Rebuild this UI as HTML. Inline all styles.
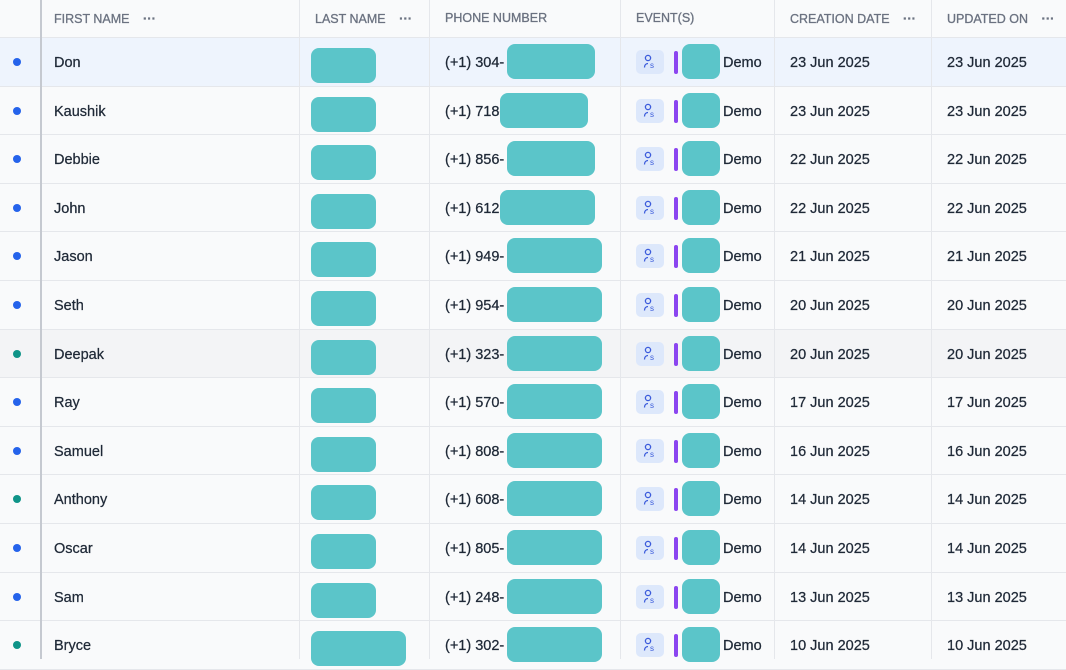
<!DOCTYPE html>
<html><head><style>
body{margin:0;width:1066px;height:659px;overflow:hidden;background:#f9fafb;font-family:"Liberation Sans",sans-serif;position:relative}
.h{position:absolute;top:0;left:0;width:1066px;height:38px;box-sizing:border-box;background:#f9fafb;border-bottom:1px solid #e5e7eb}
.ht{position:absolute;top:11px;font-size:12.5px;color:#6b7280;-webkit-text-stroke:0.3px #6b7280}
.ht b{font-weight:700;margin-left:10px;letter-spacing:0px;font-size:13px}
.vl{position:absolute;top:0;height:659px;width:1px;background:#e5e7eb}
.r{position:absolute;left:0;width:1066px;box-sizing:border-box;border-bottom:1px solid #e5e7eb;background:#f9fafb}
.r span{position:absolute;font-size:14.5px;color:#1f2937;top:17px;-webkit-text-stroke:0.25px #1f2937}
.dot{position:absolute;left:13px;top:20px;width:8px;height:8px;border-radius:50%;background:#2563eb}
.g{background:#0f9488}
.bl{position:absolute;background:#5bc5c9;border-radius:8px}
.ic{position:absolute;left:636px;top:12px;width:28px;height:24px;border-radius:5px;background:#dde8fb}
.bar{position:absolute;left:674px;top:13px;width:4px;height:23px;border-radius:2px;background:#8b45f0}
</style></head><body>
<div class="h">
<span class="ht" style="left:54px">FIRST NAME <b>···</b></span>
<span class="ht" style="left:315px">LAST NAME <b>···</b></span>
<span class="ht" style="left:445px">PHONE NUMBER</span>
<span class="ht" style="left:636px">EVENT(S)</span>
<span class="ht" style="left:790px">CREATION DATE <b>···</b></span>
<span class="ht" style="left:947px">UPDATED ON <b>···</b></span>
</div>
<div id="rows"></div>
<div class="vl" style="left:40px;background:#c5c9d0;width:2px"></div>
<div class="vl" style="left:299px"></div>
<div class="vl" style="left:429px"></div>
<div class="vl" style="left:620px"></div>
<div class="vl" style="left:774px"></div>
<div class="vl" style="left:931px"></div>
<script>
var d=[["Don","304",1,"23",507,88,0],["Kaushik","718",1,"23",500,88,0],["Debbie","856",1,"22",507,88,0],["John","612",1,"22",500,95,0],["Jason","949",1,"21",507,95,0],["Seth","954",1,"20",507,95,0],["Deepak","323",0,"20",507,95,0],["Ray","570",1,"17",507,95,0],["Samuel","808",1,"16",507,95,0],["Anthony","608",0,"14",507,95,0],["Oscar","805",1,"14",507,95,0],["Sam","248",1,"13",507,95,0],["Bryce","302",0,"10",507,95,1]];
var h="";
d.forEach(function(x,i){
var t=Math.round(38+i*48.6);var nt=Math.round(38+(i+1)*48.6);var bg=i==0?"#eef4fd":(i==6?"#f3f4f6":"#f9fafb");
h+='<div class="r" style="top:'+t+'px;height:'+(nt-t)+'px;background:'+bg+'">'+
'<div class="dot'+(x[2]?'':' g')+'"></div>'+
'<span style="left:54px">'+x[0]+'</span>'+
'<div class="bl" style="left:311px;top:10px;width:'+(x[6]?95:65)+'px;height:35px"></div>'+
'<span style="left:445px">(+1) '+x[1]+'-</span>'+
'<div class="bl" style="left:'+x[4]+'px;top:6px;width:'+x[5]+'px;height:35px"></div>'+
'<div class="ic"><svg width="28" height="24" viewBox="0 0 28 24"><circle cx="12" cy="8" r="2.6" fill="none" stroke="#3b5bdb" stroke-width="1.3"/><path d="M8.5 17.5c0-2.5 1.5-4 3.5-4" fill="none" stroke="#3b5bdb" stroke-width="1.3"/><text x="14" y="18" font-size="8" fill="#3b5bdb" font-family="Liberation Sans">s</text></svg></div>'+
'<div class="bar"></div>'+
'<div class="bl" style="left:682px;top:6px;width:38px;height:35px"></div>'+
'<span style="left:723px">Demo</span>'+
'<span style="left:790px">'+x[3]+' Jun 2025</span>'+
'<span style="left:947px">'+x[3]+' Jun 2025</span></div>';
});
document.getElementById("rows").innerHTML=h;
</script>
</body></html>
